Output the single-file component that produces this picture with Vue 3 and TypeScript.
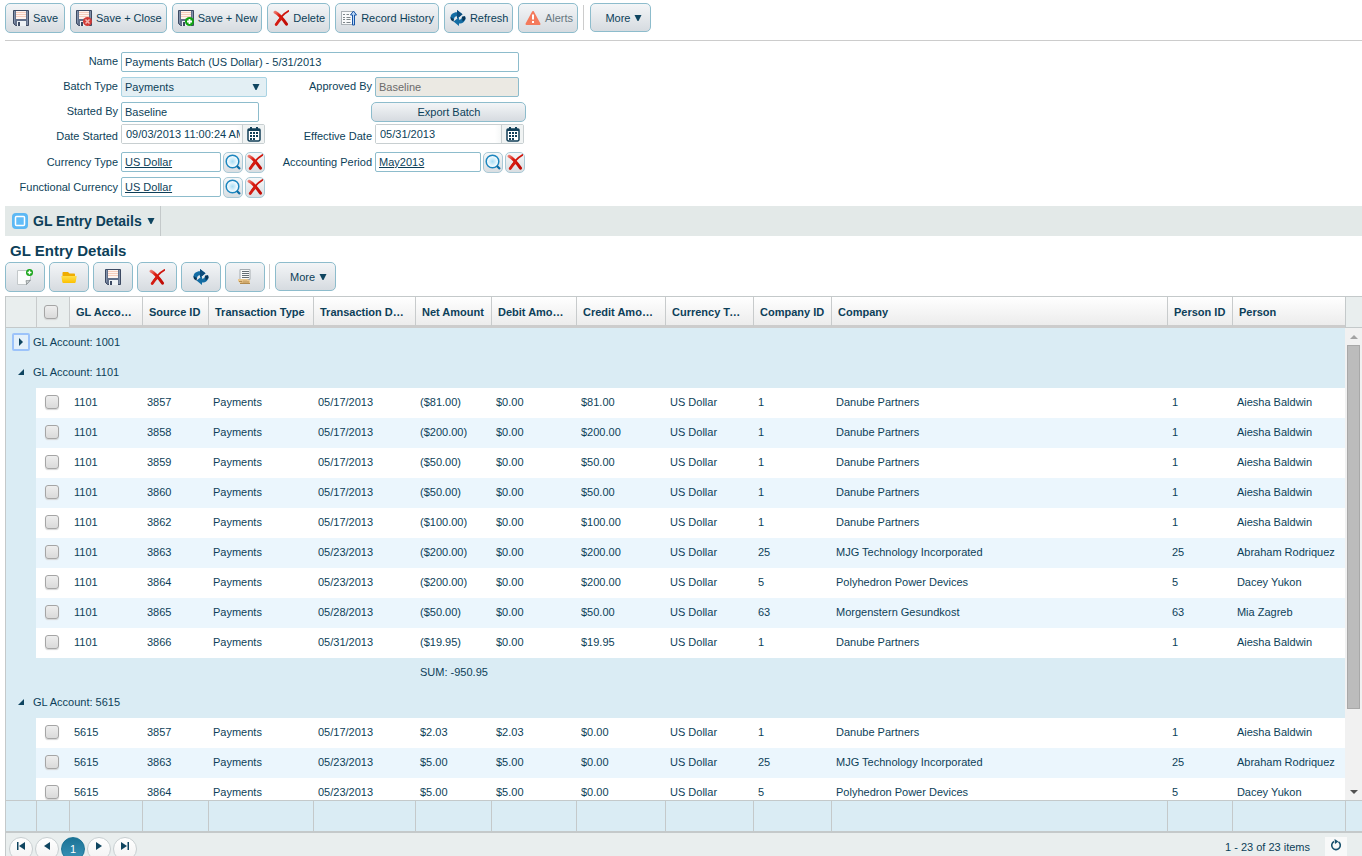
<script setup lang="ts">
import { ref } from 'vue'

interface Action { label: string; icon: string; muted?: boolean }
interface Header { text: string; clipped?: boolean }
interface Entry { account: string; source: string; date: string; net: string; debit: string; credit: string; companyId: string; company: string; person: string }
interface Group { account: string; open: boolean; sum?: string; entries: Entry[] }

const actions: Action[] = [
  { label: 'Save', icon: 'save' },
  { label: 'Save + Close', icon: 'save-close' },
  { label: 'Save + New', icon: 'save-new' },
  { label: 'Delete', icon: 'delete' },
  { label: 'Record History', icon: 'history' },
  { label: 'Refresh', icon: 'refresh' },
  { label: 'Alerts', icon: 'alert', muted: true },
]

const gridActions: Action[] = [
  { label: 'New', icon: 'new' },
  { label: 'Open', icon: 'folder' },
  { label: 'Save', icon: 'save' },
  { label: 'Delete', icon: 'delete' },
  { label: 'Refresh', icon: 'refresh' },
  { label: 'Audit', icon: 'audit' },
]

const headers: Header[] = [
  { text: 'GL Account' },
  { text: 'Source ID' },
  { text: 'Transaction Type' },
  { text: 'Transaction Date', clipped: true },
  { text: 'Net Amount' },
  { text: 'Debit Amount', clipped: true },
  { text: 'Credit Amount', clipped: true },
  { text: 'Currency Type', clipped: true },
  { text: 'Company ID' },
  { text: 'Company' },
  { text: 'Person ID' },
  { text: 'Person' },
]
const columns = ['c-indent', 'c-check', 'c-account', 'c-source', 'c-type', 'c-date', 'c-net', 'c-debit', 'c-credit', 'c-currency', 'c-company-id', 'c-company', 'c-person-id', 'c-person']

const danube = { companyId: '1', company: 'Danube Partners', person: 'Aiesha Baldwin' }
const mjg = { companyId: '25', company: 'MJG Technology Incorporated', person: 'Abraham Rodriquez' }
const poly = { companyId: '5', company: 'Polyhedron Power Devices', person: 'Dacey Yukon' }
const morgen = { companyId: '63', company: 'Morgenstern Gesundkost', person: 'Mia Zagreb' }

const credit = (source: string, date: string, amount: string, who: typeof danube): Entry =>
  ({ account: '1101', source, date, net: `($${amount})`, debit: '$0.00', credit: `$${amount}`, ...who })
const debit = (source: string, date: string, amount: string, who: typeof danube): Entry =>
  ({ account: '5615', source, date, net: `$${amount}`, debit: `$${amount}`, credit: '$0.00', ...who })

const groups = ref<Group[]>([
  { account: '1001', open: false, entries: [] },
  {
    account: '1101', open: true, sum: '-950.95',
    entries: [
      credit('3857', '05/17/2013', '81.00', danube),
      credit('3858', '05/17/2013', '200.00', danube),
      credit('3859', '05/17/2013', '50.00', danube),
      credit('3860', '05/17/2013', '50.00', danube),
      credit('3862', '05/17/2013', '100.00', danube),
      credit('3863', '05/23/2013', '200.00', mjg),
      credit('3864', '05/23/2013', '200.00', poly),
      credit('3865', '05/28/2013', '50.00', morgen),
      credit('3866', '05/31/2013', '19.95', danube),
    ],
  },
  {
    account: '5615', open: true,
    entries: [
      debit('3857', '05/17/2013', '2.03', danube),
      debit('3863', '05/23/2013', '5.00', mjg),
      debit('3864', '05/23/2013', '5.00', poly),
    ],
  },
])

const name = ref('Payments Batch (US Dollar) - 5/31/2013')
const startedBy = ref('Baseline')
const dateStarted = ref('09/03/2013 11:00:24 AM')
const effectiveDate = ref('05/31/2013')
</script>

<template>
  <svg class="sprite" aria-hidden="true">
    <defs>
      <linearGradient id="g-red" gradientUnits="userSpaceOnUse" x1="1" y1="1" x2="13" y2="13">
        <stop offset="0" stop-color="#ee8d84" /><stop offset=".4" stop-color="#dc1a0e" /><stop offset="1" stop-color="#c00c06" />
      </linearGradient>
      <linearGradient id="g-folder" x1="0" y1="0" x2="0" y2="1">
        <stop offset="0" stop-color="#ffe04d" /><stop offset="1" stop-color="#fcc000" />
      </linearGradient>
      <radialGradient id="g-lens">
        <stop offset="0" stop-color="#a8def5" /><stop offset=".75" stop-color="#eef9fe" /><stop offset="1" stop-color="#fff" />
      </radialGradient>
    </defs>
    <symbol id="save" viewBox="0 0 16 16">
      <path d="M.5 .5h15v15H2.500l-2-2z" fill="#62708a" stroke="#3d4a63" />
      <rect x="3" y="1" width="10" height="8" fill="#fff4ef" />
      <path d="M3 2.500h10M3 4.500h10M3 6.500h10" stroke="#f6cdbc" />
      <rect x="4" y="11" width="9" height="5" fill="#eef2f5" />
      <rect x="5" y="12" width="2" height="4" fill="#3d4a63" />
      <path d="M1.500 1v12M14.500 1v14" stroke="#8291a9" />
    </symbol>
    <symbol id="save-close" viewBox="0 0 16 16">
      <use href="#save" />
      <circle cx="11.500" cy="11.500" r="4.500" fill="#d33b37" />
      <path d="M9.500 9.500l4 4m0-4l-4 4" stroke="#f5b9b5" stroke-width="1.500" />
    </symbol>
    <symbol id="save-new" viewBox="0 0 16 16">
      <use href="#save" />
      <circle cx="11.500" cy="11.500" r="4.500" fill="#12a312" />
      <path d="M11.500 9v5M9 11.500h5" stroke="#fff" stroke-width="1.800" />
    </symbol>
    <symbol id="delete" viewBox="0 0 16 16">
      <path d="M2 2.200c4 2 7.500 6.300 11.500 12" fill="none" stroke="url(#g-red)" stroke-width="3" stroke-linecap="round" />
      <path d="M15.500 1C11 3.500 7 7.500 3.500 14" fill="none" stroke="#cf150c" stroke-width="1.800" stroke-linecap="round" />
      <path d="M8 8.500C6 10.500 4.500 12.500 3.200 14.500" fill="none" stroke="#d41c12" stroke-width="2.800" stroke-linecap="round" />
    </symbol>
    <symbol id="history" viewBox="0 0 16 16">
      <rect x=".5" y="1.500" width="12" height="13" fill="#f8f9fa" stroke="#a9b0b5" />
      <path d="M2 4.500h2m1.500 0H8M2 7.500h2m1.500 0h4M2 9.500h2m1.500 0h4M2 12.500h2m1.500 0h4" stroke="#7d8589" />
      <path d="M12.500 1l3 4h-2v10h-2V5h-2z" fill="#bcd8f6" stroke="#1754a6" />
    </symbol>
    <symbol id="refresh" viewBox="0 0 16 16">
      <path d="M.5 8C.5 4.500 3 2.300 7 2.300V0l5.500 4.300L7 8.800V6.300C5 6.300 4.300 7.200 4 9.300L1 9.500z" fill="#146da4" />
      <path d="M7 0l5.500 4.300L7 8.800z" fill="#0c4c7c" />
      <path d="M15.500 7.800c0 3.500-2.500 5.800-6.500 5.800V16l-5.500-4.500L9 7.200V9.700c2 0 2.700-1 3-3l3-.4z" fill="#146da4" />
      <path d="M12 6.700l3-.5.5 2.800-2.800 2.500zM.5 7l3.500 2.300-.5 2.500L1 10z" fill="#083457" />
    </symbol>
    <symbol id="alert" viewBox="0 0 16 16">
      <path d="M8 2L14.500 14h-13z" fill="#f47a5c" stroke="#f47a5c" stroke-width="2" stroke-linejoin="round" />
      <path d="M8 4.500v5M8 11v2" stroke="#fff" stroke-width="2" />
    </symbol>
    <symbol id="new" viewBox="0 0 16 16">
      <path d="M.5 1.500h13v9l-4 5h-9z" fill="#fbfcfc" stroke="#c3c8ca" />
      <path d="M13.500 11l-4 4.500c0-2-.3-3-.5-3.800 1.500.2 3 0 4.500-.7z" fill="#d8dcdd" stroke="#7c8487" stroke-width=".8" />
      <circle cx="12.500" cy="3.500" r="3.500" fill="#17a517" />
      <path d="M12.500 1.500v4M10.500 3.500h4" stroke="#fff" stroke-width="1.400" />
    </symbol>
    <symbol id="folder" viewBox="0 0 16 16">
      <path d="M1.500 7V4c0-.6.400-1 1-1H7l1.500 1.500H13c.6 0 1 .4 1 1V8z" fill="#efac00" />
      <path d="M.3 7h15.400l-1 6c-.1.600-.5 1-1 1H2.300c-.5 0-.9-.4-1-1z" fill="url(#g-folder)" />
    </symbol>
    <symbol id="audit" viewBox="0 0 16 16">
      <path d="M3 .5h10v10H3z" fill="#fafafa" stroke="#a5abb0" />
      <path d="M5 2.500h7M5 4.500h7M5 6.500h7M5 8.500h7" stroke="#666e74" />
      <path d="M1 10h9l3 1.500v3H3.500L1 12z" fill="#eac68c" />
      <path d="M2 12.500h3v1m2-2v2.500m2-2.500v2.500m2-2v2M3 14.500h10" fill="none" stroke="#b38b4d" />
    </symbol>
    <symbol id="calendar" viewBox="0 0 14 15">
      <path d="M2 2h10a1 1 0 011 1v9.500a1.500 1.500 0 01-1.500 1.500h-9A1.500 1.500 0 011 12.500V3a1 1 0 011-1z" fill="#fff" stroke="#123f58" stroke-width="1.500" />
      <path d="M1 2h12v2H1zM3 0h2v3H3zM9 0h2v3H9z" fill="#123f58" />
      <path d="M3 5h2v2H3zm3 0h2v2H6zm3 0h2v2H9zM3 8h2v2H3zm3 0h2v2H6zm3 0h2v2H9zM3 11h2v2H3zm3 0h2v2H6z" fill="#123f58" />
    </symbol>
    <symbol id="lens" viewBox="0 0 16 16">
      <circle cx="7.500" cy="7.500" r="6.300" fill="url(#g-lens)" stroke="#1c86bf" stroke-width="1.500" />
      <path d="M12 12l3 3" stroke="#0d6da5" stroke-width="2.200" />
    </symbol>
    <symbol id="panel" viewBox="0 0 16 16">
      <rect width="16" height="16" rx="4" fill="#5cb8f4" />
      <rect x="3.500" y="3.500" width="9" height="9" rx="1" fill="#62bdf8" stroke="#fff" stroke-width="1.500" />
    </symbol>
    <symbol id="down" viewBox="0 0 8 8"><path d="M.5 1h7L4.500 7h-1z" fill="#0f4560" /></symbol>
    <symbol id="first" viewBox="0 0 8 8"><path d="M0 0h1.500v8H0zM8 0v8L2 4z" fill="#0f4560" /></symbol>
    <symbol id="prev" viewBox="0 0 8 8"><path d="M7 0v8L1 4z" fill="#0f4560" /></symbol>
    <symbol id="next" viewBox="0 0 8 8"><path d="M1 0v8l6-4z" fill="#0f4560" /></symbol>
    <symbol id="last" viewBox="0 0 8 8"><path d="M6.500 0H8v8H6.500zM0 0v8l6-4z" fill="#0f4560" /></symbol>
    <symbol id="reload" viewBox="0 0 12 12">
      <path d="M4 2.500a4.300 4.300 0 104.500.3" fill="none" stroke="#16506c" stroke-width="1.600" />
      <path d="M4.500 0l4 2.500L5 5z" fill="#16506c" />
    </symbol>
  </svg>

  <main class="page">
    <div class="toolbar main-bar">
      <button v-for="a in actions" :key="a.label" type="button" class="btn" :class="{ muted: a.muted }">
        <svg class="icon"><use :href="'#' + a.icon" /></svg>{{ a.label }}
      </button>
      <span class="divider"></span>
      <button type="button" class="btn more">More<svg class="caret"><use href="#down" /></svg></button>
    </div>

    <form class="form" @submit.prevent>
      <label for="name">Name</label>
      <input id="name" v-model="name" class="box wide" type="text">

      <label for="type">Batch Type</label>
      <div class="select">
        <select id="type"><option>Payments</option></select>
        <svg class="caret"><use href="#down" /></svg>
      </div>
      <label for="approved" class="second">Approved By</label>
      <input id="approved" class="box approved" type="text" value="Baseline" disabled>

      <label for="started">Started By</label>
      <input id="started" v-model="startedBy" class="box started" type="text">
      <button type="button" class="btn export">Export Batch</button>

      <label for="date-started">Date Started</label>
      <div class="date">
        <input id="date-started" v-model="dateStarted" type="text">
        <button type="button" aria-label="Pick start date"><svg><use href="#calendar" /></svg></button>
      </div>
      <label for="effective" class="second">Effective Date</label>
      <div class="date long">
        <input id="effective" v-model="effectiveDate" type="text">
        <button type="button" aria-label="Pick effective date"><svg><use href="#calendar" /></svg></button>
      </div>

      <span class="label">Currency Type</span>
      <div class="lookup">
        <div class="box"><a href="#currency">US Dollar</a></div>
        <button type="button" aria-label="Find currency"><svg class="icon"><use href="#lens" /></svg></button>
        <button type="button" aria-label="Clear currency"><svg class="icon"><use href="#delete" /></svg></button>
      </div>
      <span class="label second">Accounting Period</span>
      <div class="lookup period">
        <div class="box"><a href="#period">May2013</a></div>
        <button type="button" aria-label="Find period"><svg class="icon"><use href="#lens" /></svg></button>
        <button type="button" aria-label="Clear period"><svg class="icon"><use href="#delete" /></svg></button>
      </div>

      <span class="label">Functional Currency</span>
      <div class="lookup">
        <div class="box"><a href="#functional">US Dollar</a></div>
        <button type="button" aria-label="Find functional currency"><svg class="icon"><use href="#lens" /></svg></button>
        <button type="button" aria-label="Clear functional currency"><svg class="icon"><use href="#delete" /></svg></button>
      </div>
    </form>

    <nav class="tabs">
      <button type="button" class="tab">
        <svg class="icon"><use href="#panel" /></svg>GL Entry Details<svg class="caret"><use href="#down" /></svg>
      </button>
    </nav>

    <h2>GL Entry Details</h2>
    <div class="toolbar grid-bar">
      <button v-for="a in gridActions" :key="a.icon" type="button" class="btn square" :aria-label="a.label">
        <svg class="icon"><use :href="'#' + a.icon" /></svg>
      </button>
      <span class="divider"></span>
      <button type="button" class="btn more">More<svg class="caret"><use href="#down" /></svg></button>
    </div>

    <section class="grid">
      <div class="strip head">
        <table>
          <colgroup><col v-for="c in columns" :key="c" :class="c"></colgroup>
          <thead>
            <tr>
              <th class="plain"></th>
              <th class="plain mid"><input type="checkbox" aria-label="Select all"></th>
              <th v-for="h in headers" :key="h.text" :class="{ clipped: h.clipped }">{{ h.text }}</th>
            </tr>
          </thead>
        </table>
        <span class="filler"></span>
      </div>

      <div class="strip body">
        <div class="viewport">
          <table>
            <colgroup><col v-for="c in columns" :key="c" :class="c"></colgroup>
            <tbody v-for="g in groups" :key="g.account">
              <tr class="group">
                <td colspan="14">
                  <div class="group-line">
                    <button type="button" :class="{ closed: !g.open }" :aria-label="'Toggle ' + g.account">
                      <svg viewBox="0 0 8 8"><path :d="g.open ? 'M7 1v6H1z' : 'M2 0v8l4-4z'" /></svg>
                    </button>
                    <span>GL Account: {{ g.account }}</span>
                  </div>
                </td>
              </tr>
              <tr v-for="(e, i) in g.entries" :key="e.source" class="entry" :class="{ alt: i % 2 === 1 }">
                <td class="indent"></td>
                <td class="mid"><input type="checkbox" :aria-label="'Select ' + e.source"></td>
                <td>{{ e.account }}</td>
                <td>{{ e.source }}</td>
                <td>Payments</td>
                <td>{{ e.date }}</td>
                <td>{{ e.net }}</td>
                <td>{{ e.debit }}</td>
                <td>{{ e.credit }}</td>
                <td>US Dollar</td>
                <td>{{ e.companyId }}</td>
                <td>{{ e.company }}</td>
                <td>{{ e.companyId }}</td>
                <td>{{ e.person }}</td>
              </tr>
              <tr v-if="g.sum">
                <td colspan="6"></td>
                <td colspan="8">SUM: {{ g.sum }}</td>
              </tr>
            </tbody>
          </table>
        </div>
        <div class="scroll">
          <svg viewBox="0 0 8 4"><path d="M0 4l4-4 4 4z" fill="#a3a3a3" /></svg>
          <div class="track"><div class="thumb"></div></div>
          <svg viewBox="0 0 8 4"><path d="M0 0l4 4 4-4z" fill="#505050" /></svg>
        </div>
      </div>

      <div class="strip foot">
        <table>
          <colgroup><col v-for="c in columns" :key="c" :class="c"></colgroup>
          <tbody><tr><td v-for="c in columns" :key="c"></td></tr></tbody>
        </table>
        <span class="filler"></span>
      </div>

      <div class="pager">
        <button type="button" aria-label="First page"><svg><use href="#first" /></svg></button>
        <button type="button" aria-label="Previous page"><svg><use href="#prev" /></svg></button>
        <button type="button" class="current">1</button>
        <button type="button" aria-label="Next page"><svg><use href="#next" /></svg></button>
        <button type="button" aria-label="Last page"><svg><use href="#last" /></svg></button>
        <span class="count">1 - 23 of 23 items</span>
        <button type="button" class="reload" aria-label="Reload"><svg><use href="#reload" /></svg></button>
      </div>
    </section>
  </main>
</template>

<style>
html, body { overflow: hidden; background: #fff; }
</style>

<style scoped>
* { box-sizing: border-box; }
button, input, select { font: inherit; color: inherit; margin: 0; }
button { padding: 0; cursor: pointer; }
.sprite { position: absolute; width: 0; height: 0; }
.page { display: flex; flex-direction: column; height: 100vh; padding-left: 5px; font-family: "Liberation Sans", Arial, sans-serif; font-size: 11px; line-height: 14px; color: #0d3f59; }
.icon { width: 16px; height: 16px; flex: none; }
.caret { width: 8px; height: 8px; flex: none; }

.toolbar { display: flex; flex: none; }
.main-bar { gap: 5px; height: 41px; padding-top: 3px; border-bottom: 1px solid #ccc; }
.grid-bar { gap: 4px; height: 34px; }
.btn { display: flex; align-items: center; justify-content: center; gap: 4px; min-width: 60px; height: 30px; padding: 0 4px 0 5px; border: 1px solid #8dbccc; border-radius: 5px; background: linear-gradient(#f3f5f7, #d6dbe0); white-space: nowrap; }
.btn.muted { color: #667780; }
.btn.more { width: 61px; height: 29px; padding-left: 10px; }
.btn.square { width: 40px; min-width: 40px; padding: 0; }
.divider { width: 1px; height: 25px; margin: 2px 1px 0 0; background: #ccc; }

.form { display: grid; flex: none; grid-template-columns: 113px 146px 102px 151px; grid-template-rows: repeat(4, 25px) 26px 24px; column-gap: 3px; align-items: center; padding: 8px 0 7px; }
.form label, .form .label { grid-column: 1; padding-bottom: 1px; text-align: right; white-space: nowrap; }
.form .second { grid-column: 3; }
.box { height: 20px; padding: 0 3px; border: 1px solid #8dbccc; border-radius: 2px; background: #fff; line-height: 18px; }
.box a { color: inherit; }
.wide { grid-column: 2 / 5; width: 398px; }
.started { width: 138px; }
.approved { width: 144px; background: #ebe9e3; color: #6b6b6b; }
.export { grid-column: 3 / 5; justify-self: end; width: 155px; height: 20px; }
.select { position: relative; display: flex; align-items: center; width: 146px; height: 20px; }
.select select { width: 100%; height: 20px; padding: 0 3px; appearance: none; border: 1px solid #a9d3e3; border-radius: 2px; background: #e3eff4; }
.select .caret { position: absolute; right: 7px; pointer-events: none; }
.date { display: flex; align-self: start; width: 144px; height: 20px; border: 1px solid #c8cfd1; border-radius: 2px; background: #f6f8f8; }
.date.long { width: 149px; }
.date input { flex: 1; min-width: 0; padding: 0 2px 0 4px; border: 0; background: linear-gradient(90deg, #fff 95%, #f6f8f8); }
.date button { display: flex; align-items: center; justify-content: center; width: 22px; border: 0; border-left: 1px solid #c8cfd1; background: #f0f3f3; }
.date svg { width: 14px; height: 15px; }
.lookup { display: flex; align-items: center; gap: 2px; width: 144px; }
.lookup.period { width: 150px; }
.lookup .box { flex: 1; }
.lookup button { display: flex; align-items: center; justify-content: center; width: 20px; height: 21px; border: 1px solid #a9c9d6; border-radius: 5px; background: linear-gradient(#f6f8f9, #d9dee2); }

.tabs { display: flex; flex: none; height: 30px; background: #e3e9e8; }
.tab { display: flex; align-items: center; gap: 5px; padding: 0 5px 0 7px; border: 0; border-right: 1px solid #c4c9ca; background: none; font-size: 14px; font-weight: bold; white-space: nowrap; }
h2 { flex: none; height: 26px; margin: 0; padding-left: 5px; font-size: 15px; line-height: 30px; }

.grid { display: flex; flex: 1; flex-direction: column; min-height: 0; border-top: 1px solid #c4c9ca; border-left: 1px solid #c4c9ca; }
.strip { display: grid; grid-template-columns: minmax(0, 1fr) 17px; flex: none; }
table { width: 100%; table-layout: fixed; border-collapse: separate; border-spacing: 0; }
.c-indent { width: 30px; }
.c-check { width: 33px; }
.c-account { width: 73px; }
.c-source { width: 66px; }
.c-type { width: 105px; }
.c-date { width: 102px; }
.c-net { width: 76px; }
.c-debit { width: 85px; }
.c-credit { width: 89px; }
.c-currency { width: 88px; }
.c-company-id { width: 78px; }
.c-person-id { width: 65px; }
.c-person { width: 113px; }
th { height: 31px; padding: 1px 5px 0 6px; border-left: 1px solid #c8cbcc; border-bottom: 3px solid #ccc; background: linear-gradient(#fff, #ececec); text-align: left; white-space: nowrap; overflow: hidden; text-overflow: ellipsis; }
th.clipped { padding-right: 10px; }
th.plain { border-bottom: 1px solid #c4c9ca; background: #e9eeee; }
th.plain:first-child { border-left: 0; }
.head .filler { border-left: 1px solid #c4c9ca; border-bottom: 1px solid #c4c9ca; background: #e9eeee; }
th.mid, td.mid { padding: 0 2px 2px 0; text-align: center; line-height: 0; }
th.mid { padding: 0 4px 0 0; }
input[type="checkbox"] { width: 14px; height: 14px; appearance: none; vertical-align: top; border: 1px solid #a5a5a5; border-radius: 3px; background: linear-gradient(#eee, #dadada); box-shadow: 0 1px 1px #d5d5d5; }

.body { flex: 1; min-height: 0; grid-template-rows: minmax(0, 1fr); background: #daecf4; }
.viewport { overflow: hidden; }
td { height: 30px; padding: 0 5px 2px; white-space: nowrap; }
.entry td { background: #fff; }
.entry.alt td { background: #ebf6fd; }
.entry td.indent { background: #daecf4; }
.group td { padding: 0; }
.group-line { display: flex; align-items: center; gap: 3px; padding: 0 0 2px 6px; }
.group-line button { display: flex; align-items: center; justify-content: center; width: 18px; height: 18px; border: 1px solid transparent; border-radius: 2px; background: none; }
.group-line button.closed { border: 2px solid #9cc3fa; background: #e3f0fa; }
.group-line svg { width: 8px; height: 8px; fill: #0f4560; }
.scroll { display: flex; flex-direction: column; align-items: center; padding: 7px 0 6px; background: #f1f1f1; }
.scroll svg { width: 8px; height: 4px; flex: none; }
.track { flex: 1; align-self: stretch; padding: 6px 2px 6px; }
.thumb { height: 83%; border: 1px solid #a8a8a8; background: #bcbcbc; }

.foot { height: 33px; border-top: 1px solid #c4c9ca; border-bottom: 2px solid #c4c9ca; background: #daecf4; }
.foot td { border-left: 1px solid #c4c9ca; padding: 0; }
.foot td:first-child { border-left: 0; }
.foot .filler { border-left: 1px solid #c4c9ca; }
.pager { display: flex; align-items: flex-start; gap: 2px; flex: none; height: 23px; padding: 4px 15px 0 3px; background: #e9eeee; overflow: hidden; }
.pager button { display: flex; justify-content: center; flex: none; width: 24px; height: 24px; padding-top: 4px; border: 1px solid #c8cfd1; border-radius: 12px; background: linear-gradient(#fff, #f2f2f2); }
.pager svg { width: 8px; height: 8px; }
.pager .current { border-color: #1b7396; background: linear-gradient(#1b7396, #3a94b8); color: #fff; }
.pager .count { flex: 1; padding-top: 3px; text-align: right; }
.pager .reload { width: 22px; margin-left: 13px; padding-top: 2px; border: 0; border-radius: 0; background: #f8f9f9; }
.pager .reload svg { width: 12px; height: 12px; }
</style>
